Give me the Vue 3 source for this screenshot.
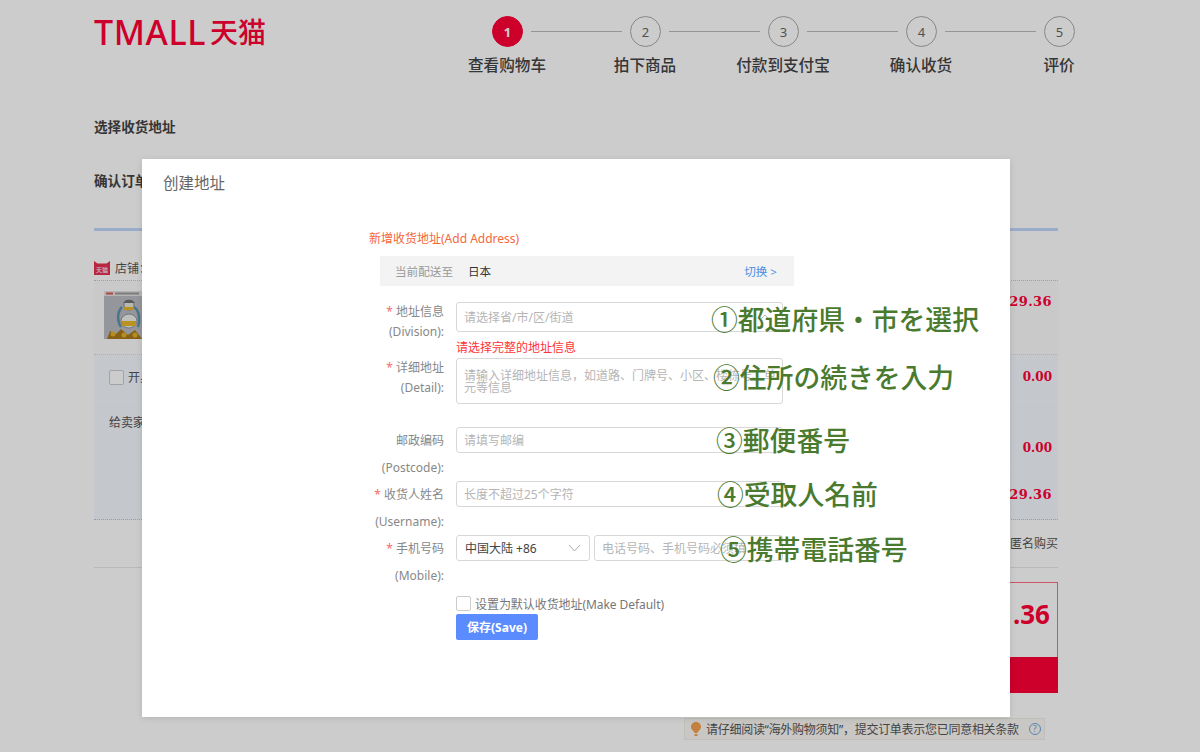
<script setup>
const steps = [
  { n: 1, label: '查看购物车' },
  { n: 2, label: '拍下商品' },
  { n: 3, label: '付款到支付宝' },
  { n: 4, label: '确认收货' },
  { n: 5, label: '评价' }
]
</script>

<template>
  <div class="page">
    <div class="main">
      <header class="header">
        <div class="logo"><span class="logo-en">TMALL</span><span class="logo-cn">天猫</span></div>
        <div class="steps">
          <div class="track">
            <template v-for="s in steps" :key="s.n">
              <span class="circle" :class="{ active: s.n === 1 }">{{ s.n }}</span>
              <span v-if="s.n < 5" class="line"></span>
            </template>
          </div>
          <div class="labels">
            <span v-for="s in steps" :key="s.n" class="label">{{ s.label }}</span>
          </div>
        </div>
      </header>

      <h3 class="sec first">选择收货地址</h3>
      <h3 class="sec second">确认订单</h3>
      <div class="blue-line"></div>

      <div class="shop">
        <svg class="shop-icon" width="16" height="14" viewBox="0 0 16 14">
          <path d="M0 0 L3.5 2.5 H12.5 L16 0 V14 H0 Z" fill="#e8304f" />
          <text x="8" y="11" font-size="6" fill="#fff" text-anchor="middle">天猫</text>
        </svg>
        <span>店铺：</span>
      </div>

      <div class="product">
        <svg class="thumb" width="66" height="48" viewBox="0 0 66 48">
          <rect width="66" height="48" fill="#b9bcc4" />
          <rect width="38" height="5" fill="#e4e0e0" />
          <rect x="2" y="1.5" width="7" height="2" fill="#d65a5a" />
          <rect x="11" y="1.5" width="24" height="2" fill="#9a9a9a" />
          <path d="M18 16 C12 22 14 32 17 36 M30 16 C36 20 36 30 34 36" fill="none" stroke="#5d93ad" stroke-width="2.5" />
          <circle cx="25" cy="14" r="5" fill="#e8e6da" stroke="#8b8f94" />
          <path d="M19 12 L22 9 H28 L31 12 Z" fill="#6d7377" />
          <ellipse cx="25" cy="30" rx="8" ry="7" fill="#eef0ee" stroke="#8e959a" />
          <rect x="18" y="30" width="14" height="5" fill="#e9b62c" />
          <rect x="20" y="16" width="10" height="3" fill="#e9b62c" />
          <path d="M3 48 L6 40 L12 43 L17 38 L24 44 L31 39 L38 48 Z" fill="#a8781a" />
          <circle cx="9" cy="43" r="2.5" fill="#e3b12a" />
          <circle cx="20" cy="44" r="2.5" fill="#e3b12a" />
          <circle cx="31" cy="44" r="2.5" fill="#e3b12a" />
        </svg>
        <span class="price">29.36</span>
      </div>

      <div class="extras">
        <div class="extra invoice">
          <span class="check"></span>
          <span class="extra-text">开具发票</span>
          <span class="price small">0.00</span>
        </div>
        <div class="extra message">
          <span class="extra-text">给卖家留言：</span>
          <span class="price small">0.00</span>
        </div>
        <div class="extra subtotal">
          <span class="price">29.36</span>
        </div>
      </div>

      <div class="anon">匿名购买</div>

      <div class="total">
        <div class="total-box">.36</div>
        <div class="total-btn"></div>
      </div>

      <div class="notice">
        <svg width="10" height="15" viewBox="0 0 10 15">
          <path d="M5 0 C8 0 10 2.2 10 5 C10 7.5 7 9 6.5 11 H3.5 C3 9 0 7.5 0 5 C0 2.2 2 0 5 0 Z" fill="#f5a04e" />
          <rect x="3.5" y="12" width="3" height="2" fill="#f5a04e" />
        </svg>
        <span class="notice-text">请仔细阅读“海外购物须知”，提交订单表示您已同意相关条款</span>
        <span class="help">?</span>
      </div>
    </div>

    <div class="mask"></div>

    <div class="modal">
      <div class="modal-title">创建地址</div>
      <div class="form">
        <div class="form-head">新增收货地址(Add Address)</div>
        <div class="ship-bar">
          <span class="ship-label">当前配送至</span>
          <span class="ship-country">日本</span>
          <span class="ship-switch">切换 &gt;</span>
        </div>

        <div class="row r-division">
          <div class="row-label"><div><i>*</i> 地址信息</div><div>(Division):</div></div>
          <div class="field">
            <input class="input tall" placeholder="请选择省/市/区/街道" />
            <svg class="arrow" width="10" height="6" viewBox="0 0 10 6"><path d="M1 5 L5 1 L9 5" fill="none" stroke="#bbb" stroke-width="1" /></svg>
            <span class="mark m1">①都道府県・市を選択</span>
          </div>
        </div>
        <div class="error">请选择完整的地址信息</div>

        <div class="row r-detail">
          <div class="row-label"><div><i>*</i> 详细地址</div><div>(Detail):</div></div>
          <div class="field">
            <textarea class="input area" placeholder="请输入详细地址信息，如道路、门牌号、小区、楼栋号、单元等信息"></textarea>
            <span class="mark m2">②住所の続きを入力</span>
          </div>
        </div>

        <div class="row r-wide post">
          <div class="row-label"><div>邮政编码</div><div>(Postcode):</div></div>
          <div class="field">
            <input class="input" placeholder="请填写邮编" />
            <span class="mark m3">③郵便番号</span>
          </div>
        </div>

        <div class="row r-wide">
          <div class="row-label"><div><i>*</i> 收货人姓名</div><div>(Username):</div></div>
          <div class="field">
            <input class="input" placeholder="长度不超过25个字符" />
            <span class="mark m4">④受取人名前</span>
          </div>
        </div>

        <div class="row r-wide">
          <div class="row-label"><div><i>*</i> 手机号码</div><div>(Mobile):</div></div>
          <div class="field phone">
            <div class="select">
              <span>中国大陆 +86</span>
              <svg width="13" height="8" viewBox="0 0 13 8"><path d="M1 1 L6.5 7 L12 1" fill="none" stroke="#aaa" stroke-width="1" /></svg>
            </div>
            <input class="input" placeholder="电话号码、手机号码必须填" />
            <span class="mark m5">⑤携帯電話番号</span>
          </div>
        </div>

        <label class="default">
          <span class="check"></span>
          <span class="default-text">设置为默认收货地址(Make Default)</span>
        </label>
        <button class="save">保存(Save)</button>
      </div>
    </div>
  </div>
</template>

<style>
html, body {
  margin: 0;
  background: #fff;
}
</style>

<style scoped>
.page {
  position: relative;
  height: 752px;
  overflow: hidden;
  background: #fff;
  font-family: "Noto Sans", "Noto Sans CJK SC", sans-serif;
  color: #333;
}

.main {
  width: 964px;
  margin-left: 94px;
  display: flex;
  flex-direction: column;
}

.header {
  display: flex;
  height: 90px;
  padding-top: 16px;
  box-sizing: border-box;
}

.logo {
  width: 344px;
  flex: none;
  display: flex;
  align-items: center;
  height: 32px;
  color: #ff0036;
  line-height: 32px;
}

.logo-en {
  font-size: 34px;
  font-weight: 500;
  letter-spacing: 0.6px;
}

.logo-cn {
  font-size: 28px;
  font-weight: 500;
  margin-left: 4px;
}

.steps {
  flex: none;
  width: 692px;
}

.track {
  display: flex;
  align-items: center;
  gap: 8px;
  padding-left: 54px;
}

.circle {
  width: 31px;
  height: 31px;
  box-sizing: border-box;
  flex: none;
  border: 1px solid #aaa;
  border-radius: 50%;
  display: flex;
  align-items: center;
  justify-content: center;
  font-size: 13px;
  color: #666;
}

.circle.active {
  background: #ff0036;
  border-color: #ff0036;
  color: #fff;
  font-weight: 700;
}

.line {
  width: 91px;
  height: 1px;
  background: #bbb;
  flex: none;
}

.labels {
  display: flex;
  margin-top: 8px;
}

.label {
  width: 138px;
  flex: none;
  text-align: center;
  font-size: 15.6px;
  line-height: 20px;
  font-weight: 500;
  color: #444;
}

.sec {
  margin: 0;
  font-size: 13.6px;
  line-height: 20px;
  font-weight: 700;
  color: #444;
}

.sec.first {
  margin-top: 27px;
}

.sec.second {
  margin-top: 34px;
}

.blue-line {
  height: 3px;
  margin-top: 37px;
  background: #c0d8ff;
}

.shop {
  height: 24px;
  display: flex;
  align-items: center;
  gap: 5px;
  padding-top: 25px;
  font-size: 12px;
  color: #555;
  border-bottom: 1px dotted #b2c8e8;
}

.shop-icon {
  flex: none;
}

.product {
  height: 73px;
  display: flex;
  justify-content: space-between;
  align-items: flex-start;
  padding: 0 6px 0 10px;
  background: #fcfcfc;
  border-bottom: 1px dotted #ddd;
}

.thumb {
  margin-top: 10px;
  flex: none;
}

.price {
  margin-left: auto;
  font-family: "DejaVu Serif", serif;
  font-weight: 700;
  font-size: 13px;
  line-height: 20px;
  letter-spacing: 0.4px;
  color: #ff0036;
}

.price.small {
  font-size: 12px;
  letter-spacing: 0;
}

.product .price {
  margin-top: 11px;
}

.extras {
  background: #f5f9ff;
  border-bottom: 1px dotted #b2c8e8;
  height: 164px;
  display: flex;
  flex-direction: column;
  padding-right: 6px;
}

.extra {
  display: flex;
  font-size: 12px;
  color: #555;
  padding-left: 15px;
}

.invoice {
  height: 45px;
  align-items: center;
  gap: 4px;
  border-bottom: 1px solid #fbfcff;
  margin-right: -6px;
  padding-right: 6px;
}

.invoice .price {
  margin-bottom: 2px;
}

.message {
  height: 67px;
  padding-top: 12px;
  box-sizing: border-box;
  border-bottom: 1px solid #fbfcff;
  margin-right: -6px;
  padding-right: 6px;
}

.message .price {
  margin-top: 25px;
}

.subtotal {
  flex: 1;
  align-items: center;
  padding-top: 2px;
}

.extra-text {
  line-height: 20px;
}

.check {
  width: 15px;
  height: 15px;
  flex: none;
  box-sizing: border-box;
  border: 1px solid #ccc;
  border-radius: 2px;
  background: #fff;
}

.anon {
  height: 48px;
  padding-top: 14px;
  box-sizing: border-box;
  text-align: right;
  font-size: 12px;
  line-height: 20px;
  color: #555;
  border-bottom: 1px solid #e8e8e8;
}

.total {
  align-self: flex-end;
  width: 300px;
  margin-top: 14px;
}

.total-box {
  height: 75px;
  box-sizing: border-box;
  border: 1px solid #ff6a80;
  border-bottom: none;
  text-align: right;
  padding-right: 7px;
  font-size: 26px;
  font-weight: 700;
  line-height: 63px;
  color: #ff0036;
}

.total-btn {
  height: 36px;
  background: #ff0036;
}

.notice {
  align-self: flex-end;
  width: 361px;
  height: 22px;
  box-sizing: border-box;
  margin-top: 25px;
  margin-right: 13px;
  padding-left: 6px;
  display: flex;
  align-items: center;
  gap: 5px;
  background: #fbf9f5;
  border: 1px solid #f0eeea;
  font-size: 12px;
  color: #555;
}

.notice-text {
  white-space: nowrap;
  letter-spacing: -0.28px;
}

.help {
  width: 12px;
  height: 12px;
  flex: none;
  box-sizing: border-box;
  margin-left: 5px;
  border: 1px solid #6fa8e0;
  border-radius: 50%;
  color: #6fa8e0;
  font-size: 9px;
  line-height: 10px;
  text-align: center;
}

.mask {
  position: absolute;
  inset: 0;
  background: rgba(0, 0, 0, 0.2);
}

.modal {
  position: absolute;
  left: 142px;
  top: 159px;
  width: 868px;
  height: 558px;
  background: #fff;
  box-shadow: 0 1px 6px rgba(0, 0, 0, 0.12);
}

.modal-title {
  padding: 13px 21px 0;
  font-size: 15.5px;
  line-height: 22px;
  color: #666;
}

.form {
  margin-left: 227px;
  width: 425px;
  padding-top: 35px;
  display: flex;
  flex-direction: column;
  font-size: 12px;
}

.form-head {
  font-size: 12px;
  line-height: 20px;
  color: #f5673a;
}

.ship-bar {
  display: flex;
  align-items: center;
  height: 30px;
  margin: 7px 0 0 11px;
  padding: 0 17px 0 15px;
  background: #f3f3f3;
  font-size: 11.6px;
}

.ship-label {
  color: #999;
}

.ship-country {
  margin-left: 15px;
  color: #333;
}

.ship-switch {
  margin-left: auto;
  color: #4a8fe0;
}

.row {
  display: grid;
  grid-template-columns: 75px 327px;
  column-gap: 12px;
  font-size: 12px;
  color: #888;
}

.r-division {
  margin-top: 16px;
  height: 38px;
}

.r-detail {
  height: 46px;
}

.r-wide {
  height: 54px;
}

.post {
  margin-top: 23px;
}

.row-label {
  white-space: nowrap;
  text-align: right;
  display: flex;
  flex-direction: column;
  align-items: flex-end;
  line-height: 20px;
}

.r-wide .row-label {
  line-height: 27px;
}

.row-label i {
  font-style: normal;
  color: #f56c6c;
}

.field {
  position: relative;
}

.input {
  display: block;
  width: 100%;
  height: 26px;
  box-sizing: border-box;
  padding: 0 7px;
  border: 1px solid #d8d8d8;
  border-radius: 3px;
  font-family: inherit;
  font-size: 12px;
  color: #333;
  background: #fff;
  outline: none;
}

.input::placeholder {
  color: #b5b5b5;
}

.input.tall {
  height: 30px;
}

.input.area {
  height: 46px;
  padding: 11px 0 0 7px;
  line-height: 12px;
  resize: none;
}

.arrow {
  position: absolute;
  right: 13px;
  top: 12px;
}

.error {
  margin: 0 0 0 87px;
  height: 18px;
  line-height: 16px;
  color: #f33;
  font-size: 12px;
}

.phone {
  display: flex;
  gap: 4px;
  height: 26px;
}

.select {
  width: 134px;
  height: 26px;
  box-sizing: border-box;
  flex: none;
  display: flex;
  align-items: center;
  justify-content: space-between;
  padding: 0 8px;
  border: 1px solid #d8d8d8;
  border-radius: 3px;
  color: #444;
}

.mark {
  position: absolute;
  font-family: "Noto Sans CJK JP", sans-serif;
  font-size: 26.8px;
  font-weight: 500;
  line-height: 34px;
  white-space: nowrap;
  color: #4a7a2e;
}

.m1 { left: 255px; top: 0px; }
.m2 { left: 257px; top: 2px; }
.m3 { left: 260px; top: -4px; }
.m4 { left: 261px; top: -4px; }
.m5 { left: 264px; top: -3px; }

.default {
  display: flex;
  align-items: center;
  gap: 4px;
  margin: 7px 0 0 87px;
  height: 15px;
  color: #777;
  font-size: 12px;
}

.default-text {
  letter-spacing: -0.06px;
}

.save {
  width: 82px;
  height: 26px;
  margin: 3px 0 0 87px;
  padding: 0;
  border: none;
  border-radius: 2px;
  background: #5a8cff;
  color: #fff;
  font-family: inherit;
  font-size: 12px;
  font-weight: 700;
}
</style>
